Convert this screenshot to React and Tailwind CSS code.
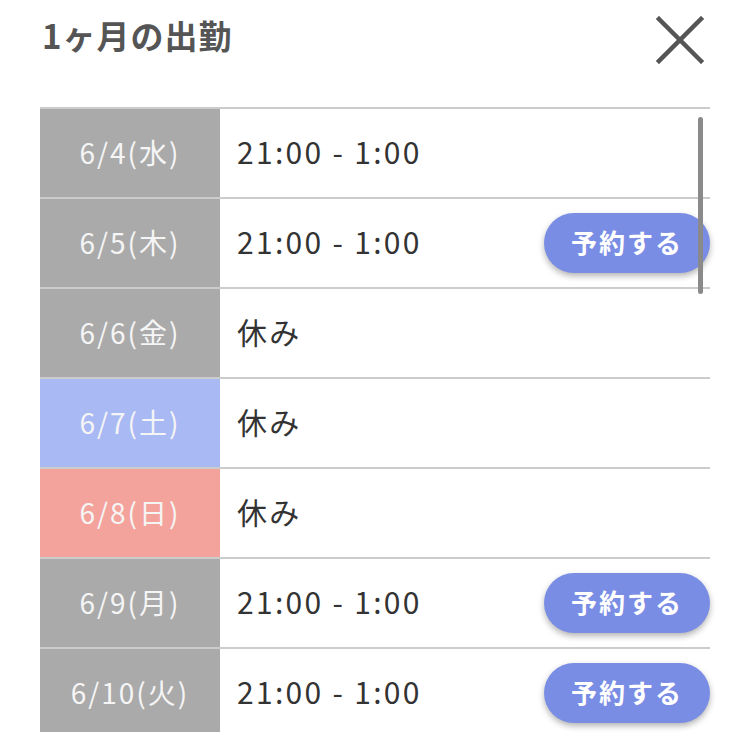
import React from "react";

const rows = [
  { date: "6/4(水)", time: "21:00 - 1:00", tone: "gray", book: false },
  { date: "6/5(木)", time: "21:00 - 1:00", tone: "gray", book: true },
  { date: "6/6(金)", time: "休み", tone: "gray", book: false },
  { date: "6/7(土)", time: "休み", tone: "blue", book: false },
  { date: "6/8(日)", time: "休み", tone: "red", book: false },
  { date: "6/9(月)", time: "21:00 - 1:00", tone: "gray", book: true },
  { date: "6/10(火)", time: "21:00 - 1:00", tone: "gray", book: true },
];

const toneClass = {
  gray: "bg-[#aaaaaa]",
  blue: "bg-[#a9b9f4]",
  red: "bg-[#f4a39c]",
};

export default function App() {
  return (
    <div
      className="w-[750px] h-[732px] overflow-hidden bg-white"
      style={{ fontFamily: '"Noto Sans CJK JP", "Noto Sans", sans-serif' }}
    >
      {/* Header */}
      <div className="flex items-center justify-between pl-[42px] pr-[46px] h-[80px]">
        <h1 className="mb-[8px] text-[33px] font-bold text-[#555555] tracking-[1px]">1ヶ月の出勤</h1>
        <button className="w-[48px] h-[48px] flex items-center justify-center">
          <svg width="48" height="48" viewBox="0 0 48 48" fill="none" stroke="#555555" strokeWidth="4.5" strokeLinecap="square">
            <path d="M3 3 L45 45 M45 3 L3 45" />
          </svg>
        </button>
      </div>

      {/* Schedule table */}
      <div className="relative mx-[40px] mt-[27px] border-t-2 border-[#cccccc]">
        {rows.map((r) => (
          <div key={r.date} className="flex h-[90px] border-b-2 border-[#cccccc]">
            <div className={`w-[180px] shrink-0 flex items-center justify-center pb-[3px] text-[28px] tracking-[2px] text-[#f5f5f5] ${toneClass[r.tone]}`}>
              {r.date}
            </div>
            <div className="flex-1 flex items-center justify-between pl-[17px]">
              <span className="pb-[3px] text-[30px] tracking-[2.3px] text-[#333333]">{r.time}</span>
              {r.book && (
                <button className="w-[166px] h-[60px] pb-[4px] rounded-full bg-[#7a8de4] text-white text-[26px] font-bold tracking-[2px] shadow-[0_3px_6px_rgba(0,0,0,0.3)]">
                  予約する
                </button>
              )}
            </div>
          </div>
        ))}
        {/* scrollbar */}
        <div className="absolute right-[7px] top-[8px] w-[5px] h-[177px] rounded-full bg-[#8a8a8a]" />
      </div>
    </div>
  );
}
